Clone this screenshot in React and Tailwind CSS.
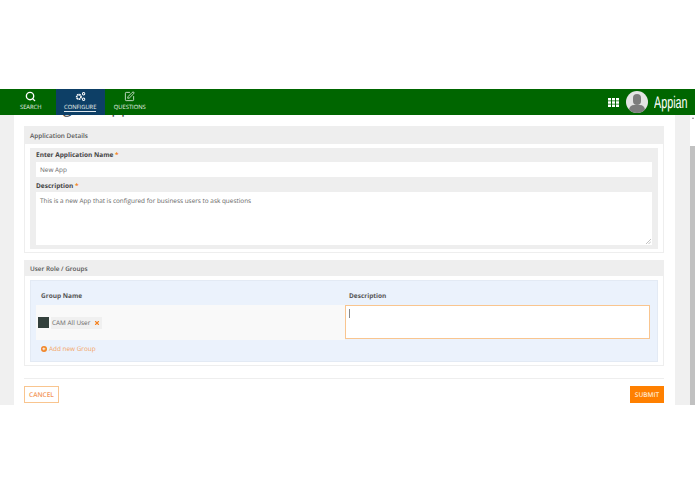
import React from 'react';
import { Search, SquarePen, X } from 'lucide-react';

const font = { fontFamily: '"Open Sans", sans-serif', textRendering: 'geometricPrecision' };

function NavItem({ icon, label, active }) {
  return (
    <div className={`flex flex-col items-center w-[49.5px] h-[26px] pt-[2px] ${active ? 'bg-[#0d3f66]' : ''}`}>
      {icon}
      <span className={`text-[5.8px] leading-[8px] mt-[1px] font-medium text-[#eef5ee] ${active ? 'border-b border-[#dfe8ef]' : ''}`}>{label}</span>
    </div>
  );
}

function GearsIcon() {
  return (
    <svg width="11" height="11" viewBox="0 0 12 12" fill="none">
      <circle cx="4.2" cy="6.4" r="2.4" stroke="#fff" strokeWidth="1.8" strokeDasharray="1.6 0.5" />
      <circle cx="9.4" cy="3" r="1.3" stroke="#fff" strokeWidth="1.1" />
      <circle cx="9.4" cy="9" r="1.3" stroke="#fff" strokeWidth="1.1" />
    </svg>
  );
}

function GridIcon() {
  return (
    <svg width="11" height="9" viewBox="0 0 11 9" fill="#fff">
      <path d="M0 0h3v2.4H0zM4 0h3v2.4H4zM8 0h3v2.4H8zM0 3.3h3v2.4H0zM4 3.3h3v2.4H4zM8 3.3h3v2.4H8zM0 6.6h3V9H0zM4 6.6h3V9H4zM8 6.6h3V9H8z" />
    </svg>
  );
}

function Required({ children }) {
  return (
    <div className="text-[6.5px] leading-[10px] font-bold text-[#444]">
      {children} <span className="text-[#f58220]">*</span>
    </div>
  );
}

export default function App() {
  return (
    <div className="w-[695px] h-[494px] bg-white overflow-hidden" style={font}>
      <div className="h-[89px]" />
      <header className="h-[26px] bg-[#006600] flex items-center pl-[6px] pr-[6px]">
        <NavItem label="SEARCH" icon={<Search size={11} strokeWidth={3} color="#fff" />} />
        <NavItem active label="CONFIGURE" icon={<GearsIcon />} />
        <NavItem label="QUESTIONS" icon={<SquarePen size={11} strokeWidth={1.6} color="#fff" />} />
        <div className="ml-auto flex items-center">
          <GridIcon />
          <div className="relative w-[22px] h-[22px] ml-[7px] rounded-full bg-[#e4e4e4] overflow-hidden">
            <div className="absolute left-[7px] top-[3px] w-[8px] h-[11px] rounded-full bg-[#7d7d7d]" />
            <div className="absolute left-[3px] top-[14px] w-[16px] h-[10px] rounded-full bg-[#7d7d7d]" />
          </div>
          <div className="ml-[6px] w-[35px]">
            <span className="block w-max origin-left text-[15px] leading-none text-white [transform:scale(0.72,1.12)]" style={{ fontFamily: '"Liberation Sans", sans-serif' }}>Appian</span>
          </div>
        </div>
      </header>
      <main className="h-[290px] flex overflow-hidden">
        <div className="w-[14px] bg-[#f0f0f0]" />
        <div className="w-[661px] pl-[10px] pr-[11px] overflow-hidden">
          <div className="h-[6px] -mt-[16px] mb-[21px] text-[16px] leading-[16px] text-[#444]">Configure App</div>
          <section className="border border-[#eeeeee] h-[127px]">
            <div className="h-[17px] bg-[#eeeeee] px-[5px] text-[6.4px] leading-[17px] font-semibold text-[#555]">Application Details</div>
            <div className="mx-[5px] mt-[4px] h-[101px] bg-[#eeeeee] px-[6px] pt-[2px]">
              <Required>Enter Application Name</Required>
              <div className="mt-[2px] h-[15px] bg-white px-[4px] text-[6.4px] leading-[15px] text-[#666]">New App</div>
              <div className="mt-[4px]"><Required>Description</Required></div>
              <div className="relative mt-[1px] h-[53px] bg-white px-[4px] pt-[4px] text-[6.4px] leading-[10px] text-[#666]">
                This is a new App that is configured for business users to ask questions
                <svg className="absolute right-[1px] bottom-[1px]" width="5" height="5" viewBox="0 0 5 5" stroke="#999" strokeWidth="0.6">
                  <path d="M0 5 5 0M2.5 5 5 2.5" />
                </svg>
              </div>
            </div>
          </section>
          <section className="mt-[7px] border border-[#eeeeee] h-[106px]">
            <div className="h-[15px] bg-[#eeeeee] px-[5px] text-[6.4px] leading-[15px] font-semibold text-[#555]">User Role / Groups</div>
            <div className="mx-[5px] mt-[4px] h-[82px] bg-[#ebf2fc] border border-[#e3eaf4] px-[5px]">
              <div className="flex h-[24px] items-end pb-[4px] text-[6.5px] leading-[10px] font-bold text-[#555]">
                <div className="w-[308px] pl-[5px]">Group Name</div>
                <div className="pl-[5px]">Description</div>
              </div>
              <div className="flex h-[35px]">
                <div className="w-[309px] bg-[#f9f9f9] flex items-center pl-[2px]">
                  <div className="w-[11px] h-[11px] bg-[#33403c]" />
                  <div className="ml-[2px] h-[12px] bg-[#f0f0f0] flex items-center pl-[1px] pr-[2px] text-[6.4px] leading-[12px] text-[#666]">
                    CAM All User
                    <X size={6} strokeWidth={4.5} color="#f58220" className="ml-[4px]" />
                  </div>
                </div>
                <div className="w-[305px] h-[34px] bg-white border border-[#f9c58f] pl-[3px] pt-[3px]">
                  <div className="w-px h-[9px] bg-[#888]" />
                </div>
              </div>
              <div className="flex items-center h-[18px] pl-[5px] text-[6.4px] text-[#f3a262]">
                <span className="w-[6px] h-[6px] mr-[2px] rounded-full bg-[#f0862a] text-white text-[6px] leading-[6px] text-center font-bold">+</span>
                Add new Group
              </div>
            </div>
          </section>
          <div className="mt-[12px] border-t border-[#eeeeee] pt-[7px] flex justify-between items-start">
            <div className="w-[35px] h-[17px] border border-[#f9c58f] text-[6.5px] leading-[15px] text-center font-semibold text-[#f3975a]">CANCEL</div>
            <div className="w-[34px] h-[17px] bg-[#ff8000] text-[6.5px] leading-[17px] text-center font-semibold text-[#ffe8d0]">SUBMIT</div>
          </div>
        </div>
        <div className="w-[15px] bg-[#f0f0f0]" />
        <div className="w-[5px] flex flex-col items-center">
          <div className="mt-[2px] w-0 h-0 border-x-[1.5px] border-x-transparent border-b-[2px] border-b-[#888]" />
          <div className="mt-[27px] w-full flex-1 bg-[#c1c1c1]" />
        </div>
      </main>
    </div>
  );
}
